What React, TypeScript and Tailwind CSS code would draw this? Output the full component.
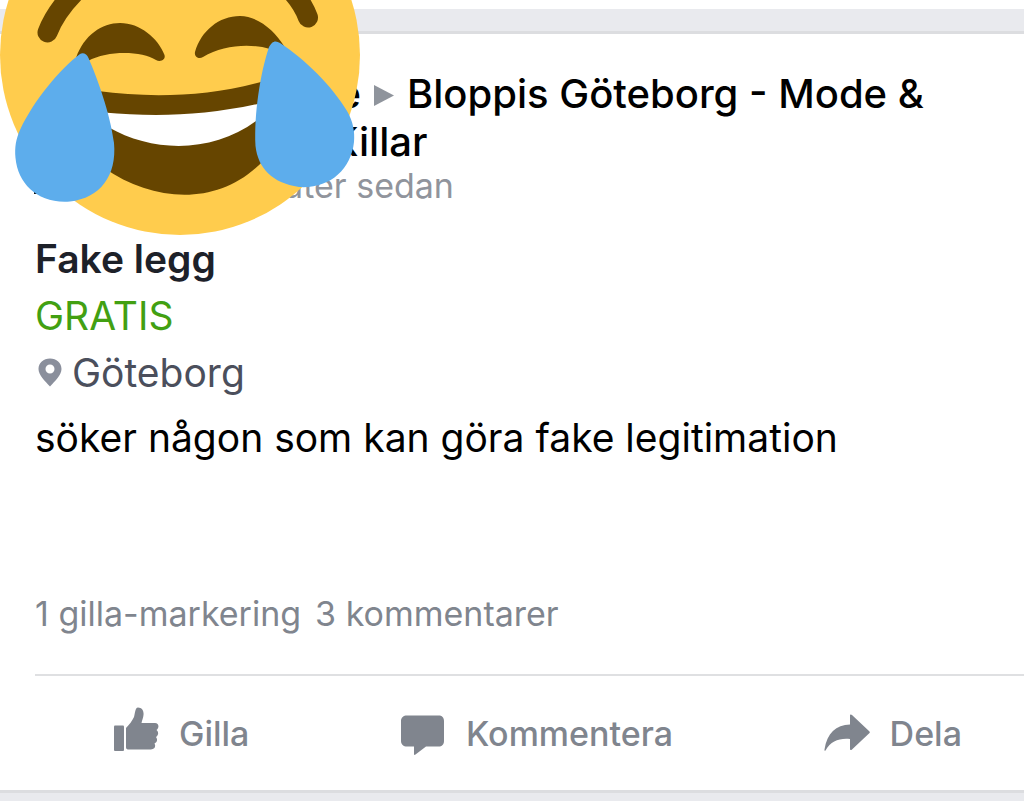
import type { ReactNode } from 'react';

interface ActionButtonProps {
  label: string;
  icon: ReactNode;
}

function JoyFace() {
  return (
    <svg
      className="absolute top-0 left-0 h-[240px] w-[364px]"
      viewBox="0 0 364 240"
      fill="none"
      role="img"
      aria-label="😂"
    >
      <rect x="34" y="190" width="6" height="4" fill="#111" />
      <circle cx="180" cy="55" r="180" fill="#FFCC4D" />
      {/* Brows */}
      <path d="M47.500 32.500C53 18 62 5 76 -9M308 17.500C303 4 296 -6 282 -18" stroke="#664500" strokeWidth="20" strokeLinecap="round" />
      {/* Eyes */}
      <path
        d="M76 58C84 35 102 23 120 23C140 23 158 38 164.500 55C166 60 160 62.500 156 60C142 51 108 50 88 61Z"
        fill="#664500"
      />
      <path
        d="M195 52C201 31 219 16 240 16C258 16 275 31 284 46L270 49C250 43 223 45 203 57C199 59.500 194 57 195 52Z"
        fill="#664500"
      />
      {/* Mouth and teeth */}
      <path d="M98 91C150 98 208 97 264 81V160C220 207 155 203 104 168Z" fill="#664500" />
      <path d="M104 112.500C155 117 205 116 262 103L260 118C216 153 155 154 108 127Z" fill="#fff" />
      {/* Tears */}
      <path
        d="M80 54C83 52 87 54 88.500 58C97 78 110 112 114 143C117 176 100 198 70 201.500C38 204 18 184 15.500 158C14.500 147 16 139 20 130C34 100 60 69 80 54Z"
        fill="#5DADEC"
      />
      <path
        d="M272 43C274 41 277 41 280 43C306 60 332 86 347 111C353 121 355 132 354 142C351 170 329 189 299 187C272 183 258 168 255.500 146C254 114 260 74 269 47C270 45 271 44 272 43Z"
        fill="#5DADEC"
      />
    </svg>
  );
}

function PinIcon() {
  return (
    <svg className="h-[29px] w-[29px]" viewBox="-3 0 29 29" fill="#8A8F9C" aria-hidden="true">
      <path
        fillRule="evenodd"
        d="M12 0.500C5.500 0.500 0.500 5 0.500 11C0.500 17 7 23 12 28.500C17 23 23.500 17 23.500 11C23.500 5 18.500 0.500 12 0.500ZM12 6.500A4.500 4.500 0 1 1 12 15.500A4.500 4.500 0 1 1 12 6.500Z"
      />
    </svg>
  );
}

function LikeIcon() {
  return (
    <svg className="size-[46px]" viewBox="0 0 46 46" fill="#80858E" aria-hidden="true">
      <rect x="1" y="19.500" width="10" height="25.500" rx="1" />
      <path d="M13 22C16 19 19 15 21 11C22 8 22 1.500 25 1.500C29 1.500 31 5 30.500 9C30.300 12 29 14 28.500 17H42C46 17 46.500 21.500 43.500 24C46 26 45.500 29.500 43 31C45 33.500 44 36.500 41.500 37.500C43 40 42 43.500 38 43.500H15C13.500 43.500 13 42.500 13 41Z" />
    </svg>
  );
}

function CommentIcon() {
  return (
    <svg className="size-[46px] overflow-visible" viewBox="0 0 46 46" fill="#80858E" aria-hidden="true">
      <path d="M7 9.500H38.500C42 9.500 44 11.500 44 15V35C44 38.500 42 40.500 38.500 40.500H26L15.500 48.500C14.500 49.200 14 49 14 48V40.500H7C3.500 40.500 1 38.500 1 35V15C1 11.500 3.500 9.500 7 9.500Z" />
    </svg>
  );
}

function ShareIcon() {
  return (
    <svg className="size-[46px]" viewBox="0 0 46 46" fill="#80858E" aria-hidden="true">
      <path d="M26 9.500C26 8.500 27 8 28 9L45.500 25.500C46 26 46 26.500 45.500 27L28 43.500C27 44.500 26 44 26 43V33C15 32 7 35 1.500 44.500C0.800 45 0.300 44.700 0.500 43.500C3 27 12 19 26 18.500Z" />
    </svg>
  );
}

function ActionButton({ label, icon }: ActionButtonProps) {
  return (
    <button type="button" className="flex items-end gap-5 text-[34px] leading-9 font-medium text-[#80858E]">
      {icon}
      {label}
    </button>
  );
}

export default function App() {
  return (
    <div className="relative min-h-screen overflow-hidden bg-[#E9EAEE] pt-[9px] font-['Inter','Liberation_Sans',sans-serif] before:absolute before:inset-x-0 before:top-0 before:h-[9px] before:bg-white">
      <article className="mt-[22px] border-y-[3px] border-[#DCDDE0] bg-white pl-[35px]">
        {/* Author and group */}
        <header className="pt-9">
          <h1 className="text-[40px] leading-12 font-medium text-black">
            <span className="flex items-center">
              <span className="w-[326px] text-right">e</span>
              <svg className="mx-3 h-[26px] w-[22px]" viewBox="0 0 22 26" fill="#8F949C" aria-hidden="true">
                <path d="M1 4L21 14.500L1 25Z" />
              </svg>
              <a href="#group">Bloppis Göteborg - Mode &amp;</a>
            </span>
            <span className="block pl-[296px]">Killar</span>
          </h1>
          <p className="pl-[190px] text-[34px] leading-10 text-[#90949C]">minuter sedan</p>
        </header>

        {/* Listing */}
        <section className="pt-6 text-[39px] leading-[57px]">
          <h2 className="font-semibold text-[#1D2129]">Fake legg</h2>
          <p className="text-[#42A012]">GRATIS</p>
          <p className="flex items-center gap-2 text-[#4B4F5C]">
            <PinIcon />
            Göteborg
          </p>
          <p className="pt-2 text-black">söker någon som kan göra fake legitimation</p>
        </section>

        <div className="flex gap-[14px] pt-[123px] pb-[35px] text-[34px] leading-[50px] text-[#80858E]">
          <a href="#likes">1 gilla-markering</a>
          <a href="#comments">3 kommentarer</a>
        </div>

        <footer className="flex justify-between border-t-2 border-[#DFE0E2] pt-[30px] pr-[62px] pb-[38px] pl-[78px]">
          <ActionButton label="Gilla" icon={<LikeIcon />} />
          <ActionButton label="Kommentera" icon={<CommentIcon />} />
          <ActionButton label="Dela" icon={<ShareIcon />} />
        </footer>
      </article>
      <JoyFace />
    </div>
  );
}
